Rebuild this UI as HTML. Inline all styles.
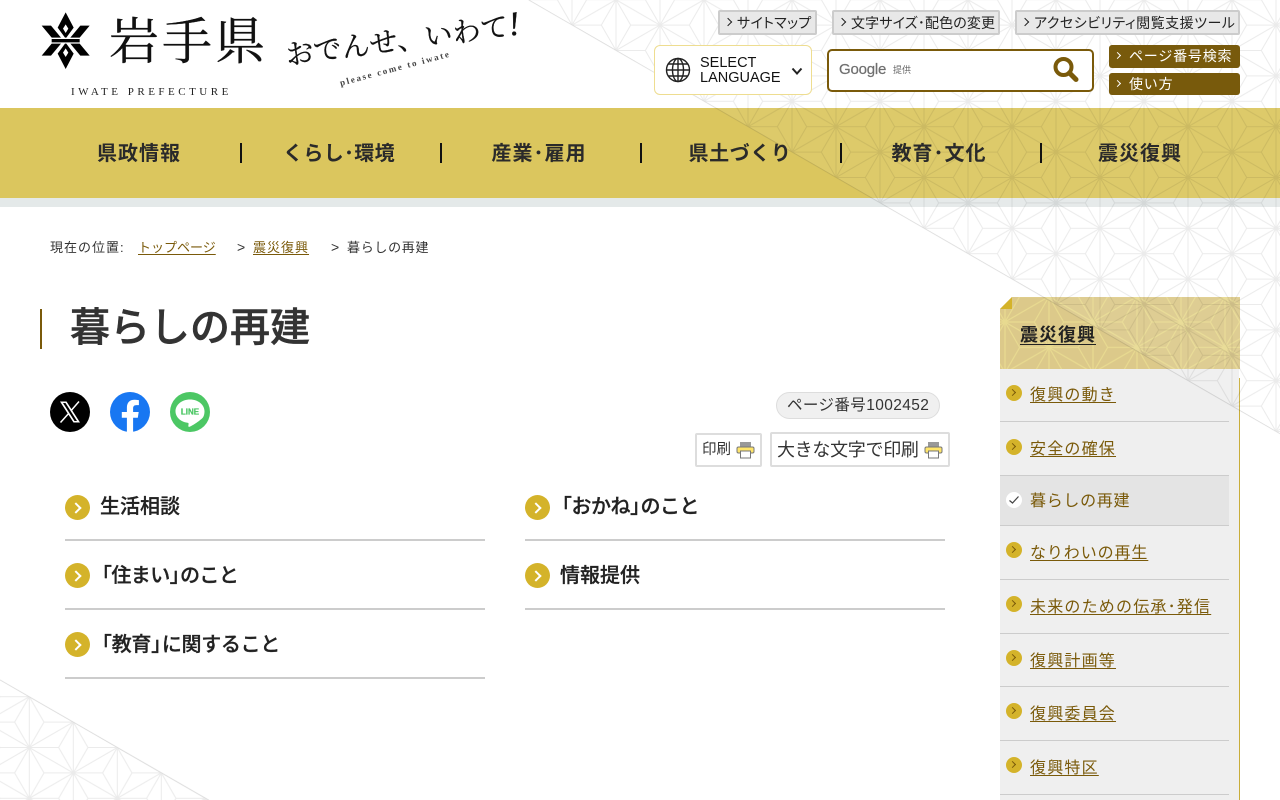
<!DOCTYPE html>
<html lang="ja"><head><meta charset="utf-8"><title>暮らしの再建</title>
<style>
html,body{margin:0;padding:0;background:#fff;width:1280px;height:800px;overflow:hidden}
body{position:relative;font-family:"Liberation Sans","Noto Sans CJK JP",sans-serif;color:#222}
.a{position:absolute}
.t{position:absolute;white-space:nowrap}
a{color:inherit}
.top{position:absolute;top:10px;height:21px;line-height:22px;background:#e8e8e8;border:2px solid #ccc;border-radius:2px;font-size:14px;color:#222;white-space:nowrap;padding-left:17px;box-sizing:content-box;font-feature-settings:"palt"}
.top:before{content:"";position:absolute;left:5px;top:7px;width:5px;height:5px;border-top:1px solid #222;border-right:1px solid #222;transform:rotate(45deg)}
.br{position:absolute;left:1109px;width:131px;background:#785a0c;border-radius:3px;color:#fff;font-size:14px;white-space:nowrap;letter-spacing:.8px;box-sizing:border-box;padding-left:20px}
.br:before{content:"";position:absolute;left:6px;top:8px;width:4px;height:4px;border-top:1px solid #fff;border-right:1px solid #fff;transform:rotate(45deg)}
.nav{position:absolute;top:139px;height:30px;line-height:30px;width:200px;text-align:center;font-size:20px;font-weight:700;letter-spacing:1px;color:#2a2a2a;white-space:nowrap}
.sep{position:absolute;top:143px;width:2px;height:20px;background:#111}
.ic{position:absolute;width:25px;height:25px;border-radius:50%;background:#d4b32a}
.ic:after{content:"";position:absolute;left:7px;top:8.5px;width:6px;height:6px;border-top:2.5px solid #fff;border-right:2.5px solid #fff;transform:rotate(45deg)}
.li{position:absolute;font-size:20px;font-weight:500;-webkit-text-stroke:.3px #222;white-space:nowrap;line-height:30px;color:#222}
.o{margin-left:-8px}.c{margin-right:-9px}
.hr{position:absolute;height:2px;width:420px;background:#ccc}
.si{position:absolute;left:1006px;width:16px;height:16px;border-radius:50%;background:#d4b32a}
.si:after{content:"";position:absolute;left:3.5px;top:5px;width:4px;height:4px;border-top:1.5px solid #7a5a0a;border-right:1.5px solid #7a5a0a;transform:rotate(45deg)}
.sl{position:absolute;left:1030px;font-size:16px;line-height:24px;letter-spacing:1.2px;color:#7a5a0a;white-space:nowrap;text-decoration:underline;text-underline-offset:2px}
.sh{position:absolute;left:1000px;width:229px;height:1px;background:#ccc}
.pb{position:absolute;background:#fff;border:2px solid #ddd;border-radius:2px;box-sizing:border-box;white-space:nowrap;color:#333}
</style></head><body>

<!-- gold nav -->
<div class="a" style="left:0;top:108px;width:1280px;height:90px;background:#dbc65e"></div>
<div class="a" style="left:0;top:198px;width:1280px;height:9px;background:#e4e9e9"></div>

<!-- side panel base -->
<div class="a" style="left:1000px;top:369px;width:239px;height:431px;background:#efefef"></div>
<div class="a" style="left:1239px;top:378px;width:1px;height:422px;background:#c8ad3a"></div>
<div class="a" style="left:1000px;top:476px;width:229px;height:50px;background:#e4e4e4"></div>
<svg class="a" style="left:1000px;top:297px" width="240" height="72" viewBox="0 0 240 72">
<defs><pattern id="p2" patternUnits="userSpaceOnUse" width="88" height="50.8" x="5" y="25">
<path d="M0 0V50.8M44 0V50.8M88 0V50.8M0 0L44 25.4L88 0M0 50.8L44 25.4L88 50.8M14.67 25.4L0 0M14.67 25.4L0 50.8M14.67 25.4H44M73.33 25.4L88 0M73.33 25.4L88 50.8M73.33 25.4H44M29.33 0H0M29.33 0L44 25.4M58.67 0H88M58.67 0L44 25.4M29.33 50.8H0M29.33 50.8L44 25.4M58.67 50.8H88M58.67 50.8L44 25.4" fill="none" stroke="#e8da90" stroke-width="1.2"/>
</pattern></defs>
<rect width="240" height="72" fill="#dcc98a"/><rect width="240" height="72" fill="url(#p2)"/>
<polygon points="0,0 12,0 0,12" fill="#fff"/>
<polygon points="12,0 12,12 0,12" fill="#d4b32a"/>
</svg>

<!-- asanoha overlays -->
<svg class="a" style="left:0;top:0;pointer-events:none" width="1280" height="800" viewBox="0 0 1280 800">
<defs>
<pattern id="p1" patternUnits="userSpaceOnUse" width="88" height="50.8" x="0" y="-0.3">
<path d="M0 0V50.8M44 0V50.8M88 0V50.8M0 0L44 25.4L88 0M0 50.8L44 25.4L88 50.8M14.67 25.4L0 0M14.67 25.4L0 50.8M14.67 25.4H44M73.33 25.4L88 0M73.33 25.4L88 50.8M73.33 25.4H44M29.33 0H0M29.33 0L44 25.4M58.67 0H88M58.67 0L44 25.4M29.33 50.8H0M29.33 50.8L44 25.4M58.67 50.8H88M58.67 50.8L44 25.4" fill="none" stroke="#000" stroke-opacity=".08" stroke-width="1"/>
</pattern>
<pattern id="p3" patternUnits="userSpaceOnUse" width="88" height="50.8" x="29.3" y="696.7">
<path d="M0 0V50.8M44 0V50.8M88 0V50.8M0 0L44 25.4L88 0M0 50.8L44 25.4L88 50.8M14.67 25.4L0 0M14.67 25.4L0 50.8M14.67 25.4H44M73.33 25.4L88 0M73.33 25.4L88 50.8M73.33 25.4H44M29.33 0H0M29.33 0L44 25.4M58.67 0H88M58.67 0L44 25.4M29.33 50.8H0M29.33 50.8L44 25.4M58.67 50.8H88M58.67 50.8L44 25.4" fill="none" stroke="#000" stroke-opacity=".08" stroke-width="1"/>
</pattern>
</defs>
<polygon points="528.6,0 1280,0 1280,433.8" fill="#fff" fill-opacity=".08"/>
<polygon points="528.6,0 1280,0 1280,433.8" fill="url(#p1)"/>
<line x1="528.6" y1="0" x2="1280" y2="433.8" stroke="#000" stroke-opacity=".08" stroke-width="1"/>
<polygon points="0,679.8 209,800 0,800" fill="url(#p3)"/>
<line x1="0" y1="679.8" x2="209" y2="800" stroke="#000" stroke-opacity=".08" stroke-width="1"/>
</svg>

<!-- emblem -->
<svg class="a" style="left:35px;top:5px" width="80" height="70" viewBox="0 0 240 210">
<path fill-rule="evenodd" fill="#000" d="M92 22L116 68L94 98H90L68 68ZM92 58L84 71L92 84L100 71Z"/>
<path fill-rule="evenodd" fill="#000" d="M92 192L116 146L94 116H90L68 146ZM92 156L84 143L92 130L100 143Z"/>
<path fill="#000" d="M20 62H48L78 98H50ZM164 62H136L106 98H134ZM20 152H48L78 116H50ZM164 152H136L106 116H134ZM50 102H134V112H50Z"/>
</svg>
<div class="t" style="left:109px;top:9px;font-family:'Liberation Serif','Noto Serif CJK SC',serif;font-size:50px;line-height:66px;letter-spacing:3px;color:#111;-webkit-text-stroke:.3px #111">岩手県</div>
<div class="t" style="left:71px;top:85px;font-family:'Liberation Serif',serif;font-size:11px;line-height:14px;letter-spacing:3.5px;color:#222">IWATE PREFECTURE</div>
<div class="t" style="left:286px;top:35px;font-family:'Liberation Serif','Noto Serif CJK SC',serif;font-size:28px;line-height:40px;letter-spacing:.2px;color:#111;-webkit-text-stroke:.3px #111;transform:rotate(-7.5deg);transform-origin:left center">おでんせ、いわて<i style="font-size:34px">!</i></div>
<div class="t" style="left:340px;top:77px;font-family:'Liberation Serif',serif;font-size:9px;font-weight:700;line-height:12px;letter-spacing:1.8px;color:#444;transform:rotate(-15deg);transform-origin:left center">please come to iwate</div>

<!-- top links -->
<div class="top" style="left:718px;width:78px;letter-spacing:.3px">サイトマップ</div>
<div class="top" style="left:832px;width:147px;letter-spacing:.15px">文字サイズ･配色の変更</div>
<div class="top" style="left:1015px;width:204px;letter-spacing:.5px">アクセシビリティ閲覧支援ツール</div>

<!-- language -->
<div class="a" style="left:654px;top:45px;width:158px;height:50px;box-sizing:border-box;background:#fff;border:1px solid #eedd90;border-radius:6px"></div>
<svg class="a" style="left:665px;top:57px" width="26" height="26" viewBox="0 0 26 26" fill="none" stroke="#222" stroke-width="1.4">
<circle cx="13" cy="13" r="11.5"/><ellipse cx="13" cy="13" rx="5.5" ry="11.5"/><path d="M13 1.5V24.5M1.5 13H24.5M3.3 7H22.7M3.3 19H22.7"/></svg>
<div class="t" style="left:700px;top:56px;font-size:14.5px;line-height:14.5px;color:#111">SELECT<br>LANGUAGE</div>
<svg class="a" style="left:791px;top:67px" width="12" height="9" viewBox="0 0 12 9" fill="none" stroke="#222" stroke-width="2"><path d="M1.5 1.5L6 6.5L10.5 1.5"/></svg>

<!-- search -->
<div class="a" style="left:827px;top:49px;width:267px;height:43px;box-sizing:border-box;background:#fff;border:2px solid #7a5a0a;border-radius:5px"></div>
<div class="t" style="left:839px;top:60px;font-size:15px;line-height:20px;color:#6f6f6f;letter-spacing:-.2px;-webkit-text-stroke:.2px #6f6f6f">Google</div>
<div class="t" style="left:893px;top:64px;font-size:9px;line-height:13px;color:#666">提供</div>
<svg class="a" style="left:1052px;top:56px" width="27" height="27" viewBox="0 0 27 27" fill="none" stroke="#7a5a0a"><circle cx="11.5" cy="11" r="8" stroke-width="4"/><path d="M17.5 17L24 23.5" stroke-width="5" stroke-linecap="round"/></svg>

<div class="br" style="top:45px;height:23px;line-height:22px">ページ番号検索</div>
<div class="br" style="top:73px;height:22px;line-height:22px">使い方</div>

<!-- nav -->
<div class="nav" style="left:39px">県政情報</div>
<div class="nav" style="left:239px;letter-spacing:.3px">くらし･環境</div>
<div class="nav" style="left:439px">産業･雇用</div>
<div class="nav" style="left:640px;letter-spacing:.6px">県土づくり</div>
<div class="nav" style="left:839px">教育･文化</div>
<div class="nav" style="left:1040px">震災復興</div>
<div class="sep" style="left:240px"></div><div class="sep" style="left:440px"></div><div class="sep" style="left:640px"></div><div class="sep" style="left:840px"></div><div class="sep" style="left:1040px"></div>

<!-- breadcrumb -->
<div class="t" style="left:50px;top:239px;font-size:13px;line-height:18px;letter-spacing:1px;color:#333">現在の位置:</div>
<div class="t" style="left:138px;top:239px;font-size:13px;line-height:18px;color:#7a5a0a;text-decoration:underline;text-underline-offset:2px">トップページ</div>
<div class="t" style="left:237px;top:238px;font-size:14px;line-height:18px;color:#333">&gt;</div>
<div class="t" style="left:253px;top:239px;font-size:13px;line-height:18px;letter-spacing:1px;color:#7a5a0a;text-decoration:underline;text-underline-offset:2px">震災復興</div>
<div class="t" style="left:331px;top:238px;font-size:14px;line-height:18px;color:#333">&gt;</div>
<div class="t" style="left:347px;top:239px;font-size:13px;line-height:18px;letter-spacing:.7px;color:#333">暮らしの再建</div>

<!-- heading -->
<div class="a" style="left:40px;top:309px;width:2px;height:40px;background:#7a5a0a"></div>
<div class="t" style="left:70px;top:299px;font-size:40px;line-height:58px;font-weight:500;-webkit-text-stroke:.5px #333;color:#333">暮らしの再建</div>

<!-- social -->
<svg class="a" style="left:50px;top:392px" width="40" height="40" viewBox="0 0 40 40"><circle cx="20" cy="20" r="20" fill="#000"/><path d="M10 9.5H16.5L30 30.5H23.5ZM13 11L24.5 29H27L15.5 11Z" fill="#fff" fill-rule="evenodd"/><path d="M29 9.5L21.3 18.4M18.6 21.5L10.5 30.5" stroke="#fff" stroke-width="1.5" fill="none"/></svg>
<svg class="a" style="left:110px;top:392px" width="40" height="40" viewBox="0 0 40 40"><circle cx="20" cy="20" r="20" fill="#1877f2"/><path d="M27.8 25.8L28.7 20H23.1V16.2C23.1 14.6 23.9 13.1 26.4 13.1H28.9V8.2C28.9 8.2 26.6 7.8 24.4 7.8C19.8 7.8 16.9 10.6 16.9 15.6V20H11.8V25.8H16.9V40C17.9 40.2 19 40 20 40C21 40 22.1 40.2 23.1 40V25.8Z" fill="#fff"/></svg>
<svg class="a" style="left:170px;top:392px" width="40" height="40" viewBox="0 0 40 40"><circle cx="20" cy="20" r="20" fill="#4cc764"/><path d="M20 7.5C12 7.5 5.5 12.7 5.5 19.2C5.5 25 10.6 29.8 17.5 30.7C18.9 31 18.7 31.5 18.4 33.3C18.3 33.9 18 35.5 20.2 34.5C22.4 33.6 30.6 28.4 33 25.4C34 23.9 34.5 21.6 34.5 19.2C34.5 12.7 28 7.5 20 7.5Z" fill="#fff"/><text x="20" y="22.5" text-anchor="middle" font-family="Liberation Sans" font-size="8" font-weight="700" fill="#4cc764" stroke="#4cc764" stroke-width=".25">LINE</text></svg>

<!-- page number -->
<div class="a" style="left:776px;top:392px;width:164px;height:27px;box-sizing:border-box;background:#f0f0f0;border:1px solid #ddd;border-radius:14px"></div>
<div class="t" style="left:787px;top:394px;font-size:15.5px;line-height:23px;letter-spacing:.4px;color:#333">ページ番号1002452</div>

<!-- print -->
<div class="pb" style="left:695px;top:433px;width:67px;height:34px;font-size:14.5px;line-height:31px;padding-left:5px">印刷</div>
<div class="pb" style="left:770px;top:432px;width:180px;height:35px;font-size:18px;line-height:32px;padding-left:5px;letter-spacing:-.3px">大きな文字で印刷</div>
<svg class="a" style="left:736px;top:441px" width="19" height="18" viewBox="0 0 19 18"><rect x="4" y="1" width="11" height="5" fill="#999"/><rect x="1" y="6" width="17" height="6" rx="1.5" fill="#ffe56a" stroke="#777" stroke-width="1"/><rect x="4.5" y="10" width="10" height="7" fill="#fff" stroke="#777"/></svg>
<svg class="a" style="left:924px;top:441px" width="19" height="18" viewBox="0 0 19 18"><rect x="4" y="1" width="11" height="5" fill="#999"/><rect x="1" y="6" width="17" height="6" rx="1.5" fill="#ffe56a" stroke="#777" stroke-width="1"/><rect x="4.5" y="10" width="10" height="7" fill="#fff" stroke="#777"/></svg>

<!-- list -->
<div class="ic" style="left:65px;top:495px"></div><div class="li" style="left:100px;top:492px">生活相談</div><div class="hr" style="left:65px;top:539px"></div>
<div class="ic" style="left:525px;top:495px"></div><div class="li" style="left:560px;top:492px;letter-spacing:-.5px"><span class="o">「</span>おかね<span class="c">」</span>のこと</div><div class="hr" style="left:525px;top:539px"></div>
<div class="ic" style="left:65px;top:563px"></div><div class="li" style="left:100px;top:561px;letter-spacing:-.6px"><span class="o">「</span>住まい<span class="c">」</span>のこと</div><div class="hr" style="left:65px;top:608px"></div>
<div class="ic" style="left:525px;top:563px"></div><div class="li" style="left:560px;top:561px">情報提供</div><div class="hr" style="left:525px;top:608px"></div>
<div class="ic" style="left:65px;top:632px"></div><div class="li" style="left:100px;top:630px;letter-spacing:-.3px"><span class="o">「</span>教育<span class="c">」</span>に関すること</div><div class="hr" style="left:65px;top:677px"></div>

<!-- side menu -->
<div class="t" style="left:1020px;top:322px;font-size:18px;line-height:26px;font-weight:700;letter-spacing:1px;color:#222;text-decoration:underline;text-underline-offset:3px">震災復興</div>
<div class="si" style="top:385px"></div><div class="sl" style="top:384px">復興の動き</div><div class="sh" style="top:421px"></div>
<div class="si" style="top:439px"></div><div class="sl" style="top:438px">安全の確保</div><div class="sh" style="top:475px"></div>
<div class="a" style="left:1006px;top:492px;width:16px;height:16px;border-radius:50%;background:#fff"></div>
<svg class="a" style="left:1006px;top:492px" width="16" height="16" viewBox="0 0 16 16" fill="none" stroke="#444" stroke-width="1.2"><path d="M3.5 8.5L6.5 11L12.5 4.5"/></svg>
<div class="sl" style="top:490px;text-decoration:none;letter-spacing:.7px">暮らしの再建</div><div class="sh" style="top:525px"></div>
<div class="si" style="top:542px"></div><div class="sl" style="top:542px;letter-spacing:.9px">なりわいの再生</div><div class="sh" style="top:579px"></div>
<div class="si" style="top:596px"></div><div class="sl" style="top:596px">未来のための伝承･発信</div><div class="sh" style="top:633px"></div>
<div class="si" style="top:650px"></div><div class="sl" style="top:650px">復興計画等</div><div class="sh" style="top:686px"></div>
<div class="si" style="top:703px"></div><div class="sl" style="top:703px">復興委員会</div><div class="sh" style="top:740px"></div>
<div class="si" style="top:757px"></div><div class="sl" style="top:757px">復興特区</div><div class="sh" style="top:794px"></div>

</body></html>
